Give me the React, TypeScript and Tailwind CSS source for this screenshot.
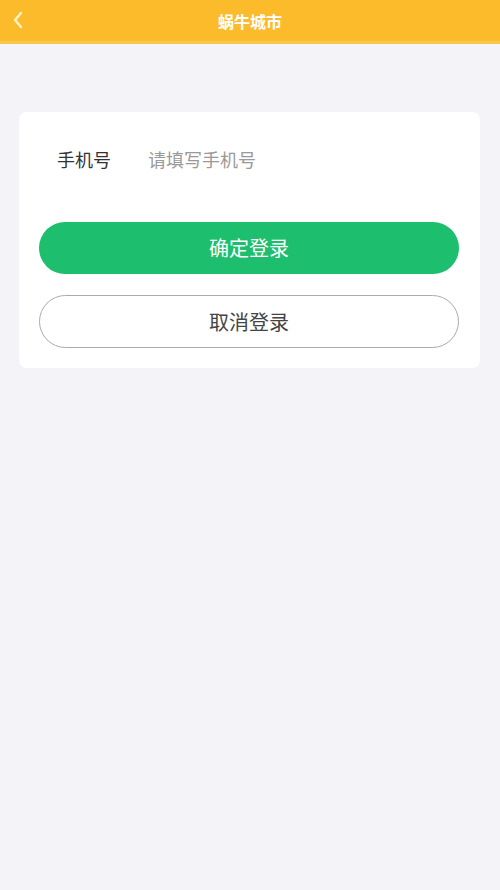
export default function App() {
  return (
    <div
      className="min-h-[890px] w-[500px] bg-[#f4f3f7]"
      style={{ fontFamily: '"Noto Sans CJK SC", "Noto Sans", sans-serif' }}
    >
      <header className="relative flex h-[44px] items-center justify-center bg-[#fbbb2b] border-b-[3px] border-[#f8c84a]">
        <button className="absolute left-[10px] top-[10px] text-[#fff3c4]">
          <svg width="16" height="20" viewBox="0 0 16 20" fill="none">
            <path d="M11 3 L5 10 L11 17" stroke="currentColor" strokeWidth="2.5" strokeLinecap="round" strokeLinejoin="round" />
          </svg>
        </button>
        <h1 className="text-[16px] font-bold text-white leading-none">蜗牛城市</h1>
      </header>

      <div className="ml-[19px] mr-[20px] mt-[68px] rounded-[8px] bg-white pl-[20px] pr-[21px] pt-[28px] pb-[20px]">
        <div className="flex items-center h-[38px] px-[18px] text-[18px]">
          <span className="w-[91px] text-[#333]">手机号</span>
          <input
            className="flex-1 bg-transparent outline-none text-[#333] placeholder:text-[#999]"
            placeholder="请填写手机号"
          />
        </div>
        <button className="mt-[44px] flex h-[52px] w-full items-center justify-center rounded-full bg-[#1dbf6e] text-[20px] text-white">
          确定登录
        </button>
        <button className="mt-[21px] flex h-[53px] w-full items-center justify-center rounded-full border border-[#aaa] bg-white text-[20px] text-[#444]">
          取消登录
        </button>
      </div>
    </div>
  );
}
